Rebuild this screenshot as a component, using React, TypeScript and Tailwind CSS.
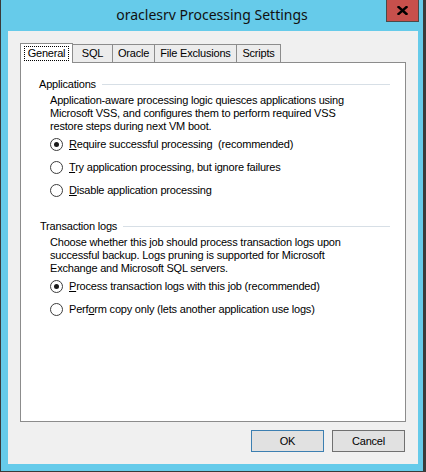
import React from 'react';

const BODY = { fontFamily: '"Liberation Sans", Arial, sans-serif' };

function Radio({ checked, children }: { checked?: boolean; children: React.ReactNode }) {
  return (
    <div className="flex items-center">
      <span className="grid h-[13px] w-[13px] place-items-center rounded-full border border-[#3c3c3c] bg-white">
        {checked && <span className="h-[5px] w-[5px] rounded-full bg-[#1a1a1a]" />}
      </span>
      <span className="ml-[6px]">{children}</span>
    </div>
  );
}

function Group({ title }: { title: string }) {
  return (
    <div className="flex items-center h-[13px]">
      <span className="pr-[6px]">{title}</span>
      <span className="h-px flex-1 bg-[#d7dfe6]" />
    </div>
  );
}

const TABS = [
  { label: 'SQL', w: 'w-[41px]' },
  { label: 'Oracle', w: 'w-[43px]' },
  { label: 'File Exclusions', w: 'w-[83px]' },
  { label: 'Scripts', w: 'w-[45px]' },
];

export default function App() {
  return (
    <div className="flex h-[472px] w-[426px] flex-col border-b border-l border-r-[3px] border-[#3a3a3a] bg-[#66cbea] text-[11px] leading-[13px] tracking-[-0.2px] text-black" style={BODY}>
      {/* title bar */}
      <div className="relative flex h-[31px] shrink-0 items-center justify-center pb-px">
        <span className="text-[14px] leading-none tracking-normal text-[#111]" style={{ fontFamily: '"Noto Sans", "Open Sans", sans-serif' }}>
          oraclesrv Processing Settings
        </span>
        <div className="absolute right-[4px] top-0 grid h-[22px] w-[33px] place-items-center border border-t-0 border-[#4a4a4a] bg-[#c7504c]">
          <svg width="11" height="9" viewBox="0 0 11 9">
            <path d="M1.5 1 L9.5 8 M9.5 1 L1.5 8" stroke="#000" strokeWidth="2.4" strokeLinecap="square" />
          </svg>
        </div>
      </div>

      {/* client area */}
      <div className="ml-[7px] flex h-[433px] w-[410px] flex-col bg-[#f0f0f0] px-[12px] pt-[12px]">
        {/* tabs */}
        <div className="flex h-[19px] items-end">
          <div className="relative z-10 -mb-px flex h-[20px] w-[53px] items-start justify-center border border-b-0 border-[#8c8c8c] bg-white pt-[2px]">
            <span className="border border-dotted border-black px-[3px] leading-[13px]">General</span>
          </div>
          {TABS.map((t) => (
            <div key={t.label} className={`-ml-px flex h-[18px] items-center justify-center border border-b-0 border-[#8c8c8c] bg-[#ececec] ${t.w} first:ml-0`}>
              {t.label}
            </div>
          ))}
        </div>

        {/* panel */}
        <div className="flex h-[360px] flex-col border border-[#8c8c8c] bg-white pl-[18px] pr-[15px] pt-[15px]">
          <Group title="Applications" />
          <div className="mt-[3px] pl-[11px]">
            <p>Application-aware processing logic quiesces applications using</p>
            <p>Microsoft VSS, and configures them to perform required VSS</p>
            <p>restore steps during next VM boot.</p>
          </div>
          <div className="flex flex-col pl-[11px]">
            <div className="flex h-[23px] items-center"><Radio checked><u>R</u>equire successful processing&nbsp; (recommended)</Radio></div>
            <div className="flex h-[23px] items-center"><Radio><u>T</u>ry application processing, but ignore failures</Radio></div>
            <div className="flex h-[23px] items-center"><Radio><u>D</u>isable application processing</Radio></div>
          </div>

          <div className="mt-[18px] pl-px">
            <Group title="Transaction logs" />
          </div>
          <div className="mt-[3px] pl-[11px]">
            <p>Choose whether this job should process transaction logs upon</p>
            <p>successful backup. Logs pruning is supported for Microsoft</p>
            <p>Exchange and Microsoft SQL servers.</p>
          </div>
          <div className="flex flex-col pl-[11px]">
            <div className="flex h-[23px] items-center"><Radio checked><u>P</u>rocess transaction logs with this job (recommended)</Radio></div>
            <div className="flex h-[22px] items-center"><Radio>Perf<u>o</u>rm copy only (lets another application use logs)</Radio></div>
          </div>
        </div>

        {/* buttons */}
        <div className="mt-[8px] flex justify-end gap-[8px] pr-px">
          <button className="h-[22px] w-[73px] border border-[#3c7fb1] bg-[#e1e1e1]">OK</button>
          <button className="h-[22px] w-[73px] border border-[#707070] bg-[#e1e1e1]">Cancel</button>
        </div>
      </div>
    </div>
  );
}
